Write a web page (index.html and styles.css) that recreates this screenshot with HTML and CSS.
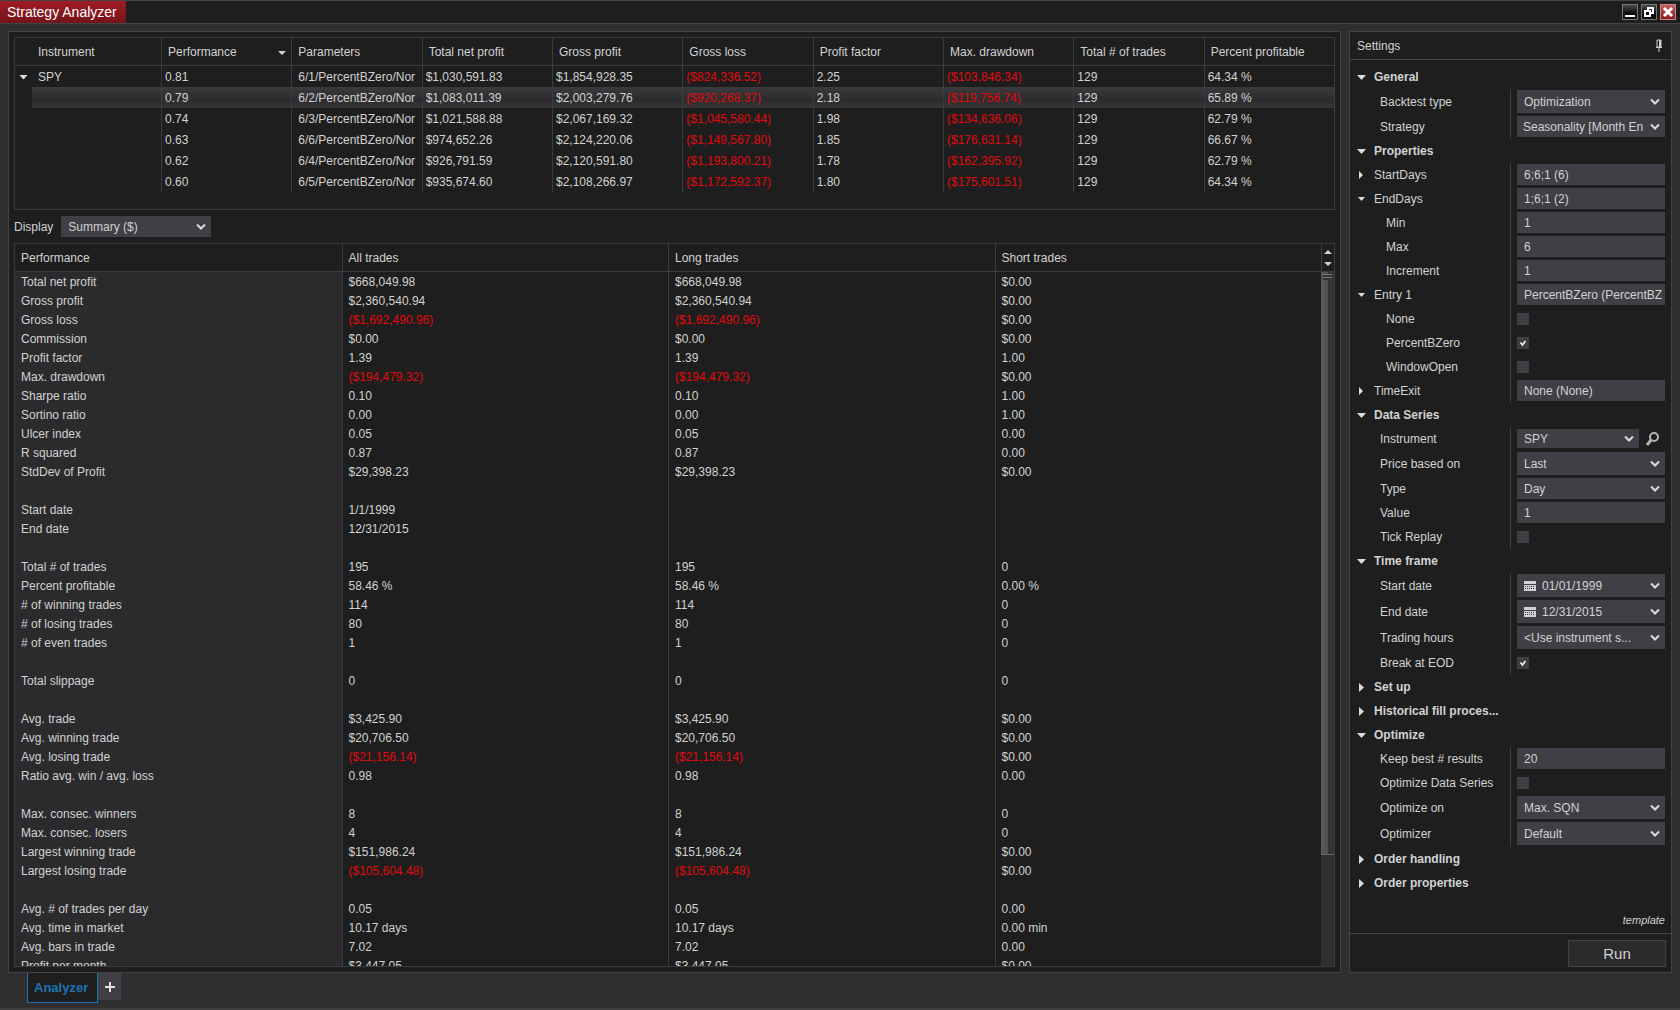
FILE: index.html
```html
<!DOCTYPE html>
<html lang="en">
<head>
    <meta charset="UTF-8">
    <meta name="viewport" content="width=device-width, initial-scale=1.0">
    <title>Strategy Analyzer</title>
    <link rel="stylesheet" href="styles.css">
</head>
<body>
    <header class="titlebar">
        <h1>Strategy Analyzer</h1>
        <div class="window-buttons">
            <button class="win-btn" aria-label="Minimize"><svg width="16" height="16" viewBox="0 0 16 16"><path d="M3 11h10v2H3z" fill="#fff"/></svg></button>
            <button class="win-btn" aria-label="Restore"><svg width="16" height="16" viewBox="0 0 16 16"><path d="M7 6V4h5v5h-2M4 7h5v5H4z" fill="none" stroke="#fff" stroke-width="2"/></svg></button>
            <button class="win-btn close" aria-label="Close"><svg width="16" height="16" viewBox="0 0 16 16"><path d="M4 4l8 8M12 4l-8 8" stroke="#fff" stroke-width="3"/></svg></button>
        </div>
    </header>

    <main class="workspace">
        <section class="panel results">
            <div class="grid-box optimizer-grid">
                <table class="optimizer">
                    <thead>
                        <tr>
                            <th class="toggle-col"></th>
                            <th class="instrument">Instrument</th>
                            <th class="sorted">Performance</th>
                            <th>Parameters</th>
                            <th>Total net profit</th>
                            <th>Gross profit</th>
                            <th>Gross loss</th>
                            <th>Profit factor</th>
                            <th>Max. drawdown</th>
                            <th>Total # of trades</th>
                            <th>Percent profitable</th>
                        </tr>
                    </thead>
                    <tbody id="optimizer-rows"></tbody>
                </table>
            </div>

            <div class="display-row">
                <label for="display">Display</label>
                <select id="display"><option>Summary ($)</option></select>
            </div>

            <div class="grid-box summary-grid">
                <div class="summary-scroll">
                    <table class="summary">
                        <thead>
                            <tr><th>Performance</th><th>All trades</th><th>Long trades</th><th>Short trades</th></tr>
                        </thead>
                        <tbody id="summary-rows"></tbody>
                    </table>
                </div>
                <div class="scrollbar">
                    <div class="scroll-arrows">
                        <button class="arrow up" aria-label="Scroll up"></button>
                        <button class="arrow down" aria-label="Scroll down"></button>
                    </div>
                    <div class="track"><div class="thumb"></div></div>
                </div>
            </div>
        </section>

        <aside class="panel settings">
            <div class="settings-head">
                <h2>Settings</h2>
                <button class="pin" aria-label="Pin"><svg width="8" height="14" viewBox="0 0 8 14"><path d="M2 1h4v7H2zM1 8.500h6M4 8v5" fill="none" stroke="#d0d0d0"/><path d="M4 1h2v7H4z" fill="#d0d0d0"/></svg></button>
            </div>

            <form class="properties">
                <h3><button type="button" class="expander open">General</button></h3>
                <div class="group">
                    <div class="row tall"><label for="backtest">Backtest type</label><select id="backtest"><option>Optimization</option></select></div>
                    <div class="row"><label for="strategy">Strategy</label><select id="strategy" class="wide-text"><option>Seasonality [Month En</option></select></div>
                </div>

                <h3><button type="button" class="expander open">Properties</button></h3>
                <div class="group">
                    <div class="row parent"><label for="startdays"><span class="mark"></span>StartDays</label><input type="text" id="startdays" value="6;6;1 (6)"></div>
                    <div class="row parent open"><label for="enddays"><span class="mark"></span>EndDays</label><input type="text" id="enddays" value="1;6;1 (2)"></div>
                    <div class="row child"><label for="min">Min</label><input type="text" id="min" value="1"></div>
                    <div class="row child"><label for="max">Max</label><input type="text" id="max" value="6"></div>
                    <div class="row child"><label for="increment">Increment</label><input type="text" id="increment" value="1"></div>
                    <div class="row parent open"><label for="entry"><span class="mark"></span>Entry 1</label><input type="text" id="entry" value="PercentBZero (PercentBZero)"></div>
                    <div class="row child"><label for="none">None</label><input type="checkbox" id="none"></div>
                    <div class="row child"><label for="pbz">PercentBZero</label><input type="checkbox" id="pbz" checked></div>
                    <div class="row child"><label for="window">WindowOpen</label><input type="checkbox" id="window"></div>
                    <div class="row parent"><label for="timeexit"><span class="mark"></span>TimeExit</label><input type="text" id="timeexit" value="None (None)"></div>
                </div>

                <h3><button type="button" class="expander open">Data Series</button></h3>
                <div class="group">
                    <div class="row">
                        <label for="instrument">Instrument</label>
                        <div class="with-search">
                            <select id="instrument"><option>SPY</option></select>
                            <button type="button" class="search" aria-label="Find instrument"><svg width="16" height="16" viewBox="0 0 16 16"><circle cx="9" cy="6" r="4" fill="none" stroke="#b4b4b4" stroke-width="2"/><path d="M6 9l-4 5" stroke="#b4b4b4" stroke-width="3"/></svg></button>
                        </div>
                    </div>
                    <div class="row tall"><label for="price">Price based on</label><select id="price"><option>Last</option></select></div>
                    <div class="row"><label for="type">Type</label><select id="type"><option>Day</option></select></div>
                    <div class="row"><label for="value">Value</label><input type="text" id="value" value="1"></div>
                    <div class="row"><label for="tick">Tick Replay</label><input type="checkbox" id="tick"></div>
                </div>

                <h3><button type="button" class="expander open">Time frame</button></h3>
                <div class="group">
                    <div class="row tall"><label for="start">Start date</label><select id="start" class="date"><option>01/01/1999</option></select></div>
                    <div class="row tall"><label for="end">End date</label><select id="end" class="date"><option>12/31/2015</option></select></div>
                    <div class="row tall"><label for="hours">Trading hours</label><select id="hours"><option>&lt;Use instrument s...</option></select></div>
                    <div class="row"><label for="eod">Break at EOD</label><input type="checkbox" id="eod" checked></div>
                </div>

                <h3><button type="button" class="expander">Set up</button></h3>
                <h3><button type="button" class="expander">Historical fill proces...</button></h3>
                <h3><button type="button" class="expander open">Optimize</button></h3>
                <div class="group">
                    <div class="row"><label for="keep">Keep best # results</label><input type="text" id="keep" value="20"></div>
                    <div class="row"><label for="optseries">Optimize Data Series</label><input type="checkbox" id="optseries"></div>
                    <div class="row tall"><label for="opton">Optimize on</label><select id="opton"><option>Max. SQN</option></select></div>
                    <div class="row tall"><label for="optimizer">Optimizer</label><select id="optimizer"><option>Default</option></select></div>
                </div>
                <h3><button type="button" class="expander">Order handling</button></h3>
                <h3><button type="button" class="expander">Order properties</button></h3>
            </form>

            <a class="template" href="#">template</a>
            <div class="run-bar"><button class="run">Run</button></div>
        </aside>
    </main>

    <footer class="tabs">
        <button class="tab">Analyzer</button>
        <button class="add-tab" aria-label="New tab"><svg width="12" height="12" viewBox="0 0 12 12"><path d="M6 1v10M1 6h10" stroke="#e0e0e0" stroke-width="2"/></svg></button>
    </footer>

    <script>
        const runs = [
            ['0.81', '6/1/PercentBZero/Nor', '$1,030,591.83', '$1,854,928.35', '($824,336.52)', '2.25', '($103,846.34)', '129', '64.34 %'],
            ['0.79', '6/2/PercentBZero/Nor', '$1,083,011.39', '$2,003,279.76', '($920,268.37)', '2.18', '($119,756.74)', '129', '65.89 %'],
            ['0.74', '6/3/PercentBZero/Nor', '$1,021,588.88', '$2,067,169.32', '($1,045,580.44)', '1.98', '($134,636.06)', '129', '62.79 %'],
            ['0.63', '6/6/PercentBZero/Nor', '$974,652.26', '$2,124,220.06', '($1,149,567.80)', '1.85', '($176,631.14)', '129', '66.67 %'],
            ['0.62', '6/4/PercentBZero/Nor', '$926,791.59', '$2,120,591.80', '($1,193,800.21)', '1.78', '($162,395.92)', '129', '62.79 %'],
            ['0.60', '6/5/PercentBZero/Nor', '$935,674.60', '$2,108,266.97', '($1,172,592.37)', '1.80', '($175,601.51)', '129', '64.34 %']
        ];

        // Empty rows separate the blocks of the summary
        const summary = [
            ['Total net profit', '$668,049.98', '$668,049.98', '$0.00'],
            ['Gross profit', '$2,360,540.94', '$2,360,540.94', '$0.00'],
            ['Gross loss', '($1,692,490.96)', '($1,692,490.96)', '$0.00'],
            ['Commission', '$0.00', '$0.00', '$0.00'],
            ['Profit factor', '1.39', '1.39', '1.00'],
            ['Max. drawdown', '($194,479.32)', '($194,479.32)', '$0.00'],
            ['Sharpe ratio', '0.10', '0.10', '1.00'],
            ['Sortino ratio', '0.00', '0.00', '1.00'],
            ['Ulcer index', '0.05', '0.05', '0.00'],
            ['R squared', '0.87', '0.87', '0.00'],
            ['StdDev of Profit', '$29,398.23', '$29,398.23', '$0.00'],
            ['', '', '', ''],
            ['Start date', '1/1/1999', '', ''],
            ['End date', '12/31/2015', '', ''],
            ['', '', '', ''],
            ['Total # of trades', '195', '195', '0'],
            ['Percent profitable', '58.46 %', '58.46 %', '0.00 %'],
            ['# of winning trades', '114', '114', '0'],
            ['# of losing trades', '80', '80', '0'],
            ['# of even trades', '1', '1', '0'],
            ['', '', '', ''],
            ['Total slippage', '0', '0', '0'],
            ['', '', '', ''],
            ['Avg. trade', '$3,425.90', '$3,425.90', '$0.00'],
            ['Avg. winning trade', '$20,706.50', '$20,706.50', '$0.00'],
            ['Avg. losing trade', '($21,156.14)', '($21,156.14)', '$0.00'],
            ['Ratio avg. win / avg. loss', '0.98', '0.98', '0.00'],
            ['', '', '', ''],
            ['Max. consec. winners', '8', '8', '0'],
            ['Max. consec. losers', '4', '4', '0'],
            ['Largest winning trade', '$151,986.24', '$151,986.24', '$0.00'],
            ['Largest losing trade', '($105,604.48)', '($105,604.48)', '$0.00'],
            ['', '', '', ''],
            ['Avg. # of trades per day', '0.05', '0.05', '0.00'],
            ['Avg. time in market', '10.17 days', '10.17 days', '0.00 min'],
            ['Avg. bars in trade', '7.02', '7.02', '0.00'],
            ['Profit per month', '$3,447.05', '$3,447.05', '$0.00']
        ];

        function addCell(row, text) {
            const cell = row.insertCell();
            cell.textContent = text;
            // Amounts in brackets are losses
            if (text.startsWith('(')) {
                cell.className = 'loss';
            }
            return cell;
        }

        runs.forEach((run, i) => {
            const row = document.getElementById('optimizer-rows').insertRow();
            const toggle = addCell(row, '');
            toggle.className = 'toggle-col';
            if (i === 0) {
                toggle.innerHTML = '<button class="expander open" aria-label="Collapse SPY"></button>';
            }
            if (i === 1) {
                row.className = 'selected';
            }
            addCell(row, i === 0 ? 'SPY' : '').className = 'instrument';
            run.forEach(text => addCell(row, text));
        });

        summary.forEach(line => {
            const row = document.getElementById('summary-rows').insertRow();
            line.forEach(text => addCell(row, text));
        });
    </script>
</body>
</html>
```
FILE: styles.css
```css
* {
    box-sizing: border-box;
}
body {
    margin: 0;
    height: 100vh;
    display: flex;
    flex-direction: column;
    overflow: hidden;
    background: #2f2f31;
    border-bottom: 2px solid #3e3e41;
    color: #d2d2d2;
    font-family: "Liberation Sans", Arial, sans-serif;
    font-size: 12px;
    line-height: 16px;
}
button, input, select {
    margin: 0;
    padding: 0;
    border: 0;
    border-radius: 0;
    background: none;
    color: inherit;
    font: inherit;
}
h1, h2, h3 {
    margin: 0;
    font-size: 12px;
    font-weight: normal;
}
svg {
    display: block;
}

/* Title bar */
.titlebar {
    display: flex;
    justify-content: space-between;
    height: 24px;
    background: #1e1e1e;
    border-top: 1px solid #434346;
    border-bottom: 1px solid #434346;
}
.titlebar h1 {
    padding: 0 9px 0 7px;
    background: linear-gradient(#a01c26, #741319);
    color: #fff;
    font-size: 14px;
    line-height: 22px;
}
.window-buttons {
    display: flex;
    gap: 3px;
    padding: 3px 4px;
}
.win-btn {
    width: 16px;
    height: 16px;
    background: linear-gradient(#505050, #0c0c0c 60%);
    outline: 1px solid #777;
    outline-offset: -1px;
}
.win-btn.close {
    background: linear-gradient(#c86468, #8a141c);
    outline-color: #c08a8c;
}

/* Panels */
.workspace {
    flex: 1;
    min-height: 0;
    display: flex;
    gap: 8px;
    padding: 7px 8px 0;
}
.panel {
    display: flex;
    flex-direction: column;
    background: #1e1e1e;
    border: 1px solid #434346;
}
.results {
    flex: 1;
    min-width: 0;
    padding: 5px;
}
.settings {
    width: 323px;
}
.grid-box {
    border: 1px solid #3c3c3f;
}

/* Tables */
table {
    width: 100%;
    table-layout: fixed;
    border-collapse: separate;
    border-spacing: 0;
}
th, td {
    padding: 0 0 0 6px;
    border-left: 1px solid #3c3c3f;
    font-weight: normal;
    text-align: left;
    white-space: nowrap;
    overflow: hidden;
}
th {
    height: 28px;
    border-bottom: 1px solid #3c3c3f;
}
.loss {
    color: #e00a0e;
}
.optimizer-grid {
    height: 173px;
}
.optimizer td {
    height: 21px;
    padding-left: 3px;
}
.optimizer td:nth-child(4) {
    padding-left: 6px;
}
.optimizer .toggle-col {
    width: 17px;
    padding: 0;
    border-left: 0;
}
.optimizer .instrument {
    width: 129px;
    padding-left: 6px;
    border-left: 0;
}
.optimizer .selected td:not(.toggle-col) {
    background: linear-gradient(#3b3b3d, #2c2c2e 60%, #353537);
}
.sorted::after {
    content: "";
    float: right;
    margin: 7px 5px 0 0;
    border: 4px solid transparent;
    border-top-color: #d2d2d2;
    border-bottom: 0;
}
.display-row {
    display: flex;
    align-items: center;
    gap: 8px;
    height: 33px;
}
.display-row select {
    width: 150px;
}
.summary-grid {
    flex: 1;
    min-height: 0;
    display: flex;
}
.summary-scroll {
    flex: 1;
    overflow: hidden;
}
.summary td {
    height: 19px;
}
.summary td:first-child {
    background: #2b2b2d;
}
.summary th:first-child, .summary td:first-child {
    border-left: 0;
}

/* Scrollbar */
.scrollbar {
    display: flex;
    flex-direction: column;
    width: 13px;
}
.scroll-arrows {
    display: flex;
    flex-direction: column;
    align-items: center;
    justify-content: center;
    gap: 8px;
    height: 28px;
    border-left: 1px solid #3c3c3f;
    border-bottom: 1px solid #3c3c3f;
}
.arrow {
    border: 4px solid transparent;
}
.arrow.up {
    border-top: 0;
    border-bottom-color: #d2d2d2;
}
.arrow.down {
    border-bottom: 0;
    border-top-color: #d2d2d2;
}
.track {
    flex: 1;
    background: #303032;
}
.thumb {
    height: 84%;
    padding-top: 2px;
    background: linear-gradient(90deg, #5c5c5c, #4e4e4e 50%, #343436 55%);
    border-bottom: 1px solid #6a6a6a;
}
.thumb::before {
    content: "";
    display: block;
    height: 6px;
    margin: 0 2px;
    background: repeating-linear-gradient(#777 0 1px, #333 1px 3px);
}

/* Settings */
.settings-head {
    display: flex;
    align-items: center;
    justify-content: space-between;
    height: 28px;
    padding: 0 8px 0 7px;
    border-bottom: 1px solid #434346;
}
.properties {
    padding-top: 5px;
}
.expander {
    display: block;
    height: 24px;
    width: 160px;
    padding-left: 9px;
    font-weight: bold;
    text-align: left;
    white-space: nowrap;
}
.expander::before {
    content: "";
    display: inline-block;
    width: 5px;
    height: 9px;
    margin-right: 10px;
    background: #dcdcdc;
    clip-path: polygon(0 0, 100% 50%, 0 100%);
    vertical-align: -1px;
}
.expander.open::before {
    width: 9px;
    height: 5px;
    margin: 0 8px 0 -2px;
    clip-path: polygon(0 0, 100% 0, 50% 100%);
    vertical-align: 1px;
}
.optimizer .expander {
    width: 17px;
    height: 21px;
    padding-left: 6px;
}
.optimizer .expander::before {
    margin-right: 0;
}
.row {
    display: grid;
    grid-template-columns: 161px 1fr;
    align-items: center;
    height: 24px;
    padding: 0 6px 1px 0;
}
.row.tall {
    height: 26px;
}
.row label {
    align-self: stretch;
    display: flex;
    align-items: center;
    margin-bottom: -1px;
    padding-left: 30px;
    border-right: 1px solid #434346;
}
.row.child label {
    padding-left: 36px;
}
.row.parent label {
    padding-left: 9px;
}
.row > :last-child {
    margin-left: 6px;
}
.mark {
    width: 4px;
    height: 8px;
    margin-right: 11px;
    background: #dcdcdc;
    clip-path: polygon(0 0, 100% 50%, 0 100%);
}
.open > label > .mark {
    width: 7px;
    height: 4px;
    margin: 0 9px 0 -1px;
    clip-path: polygon(0 0, 100% 0, 50% 100%);
}
input[type="text"], select {
    min-width: 0;
    height: 21px;
    padding: 0 3px 0 7px;
    background-color: #3f3f45;
}
select {
    appearance: none;
    padding-right: 18px;
    background-image: url("data:image/svg+xml,%3Csvg xmlns='http://www.w3.org/2000/svg' width='10' height='8'%3E%3Cpath d='M1 1.5l4 4 4-4' fill='none' stroke='%23dcdcdc' stroke-width='2'/%3E%3C/svg%3E");
    background-repeat: no-repeat;
    background-position: right 5px center;
}
.tall select {
    height: 23px;
}
select.wide-text {
    padding: 0 16px 0 6px;
}
select.date {
    padding-left: 25px;
    background-image: url("data:image/svg+xml,%3Csvg xmlns='http://www.w3.org/2000/svg' width='10' height='8'%3E%3Cpath d='M1 1.5l4 4 4-4' fill='none' stroke='%23dcdcdc' stroke-width='2'/%3E%3C/svg%3E"), url("data:image/svg+xml,%3Csvg xmlns='http://www.w3.org/2000/svg' width='12' height='12'%3E%3Cpath d='M0 1h12v3H0zM0 5h12v6H0z' fill='%23d2d2d2'/%3E%3Cpath d='M1 6.500h10M1 8.500h10' stroke='%233f3f45' stroke-dasharray='1 1'/%3E%3C/svg%3E");
    background-position: right 5px center, 7px center;
}
input[type="checkbox"] {
    appearance: none;
    width: 12px;
    height: 12px;
    background: #3f3f45;
}
input[type="checkbox"]:checked {
    background: #3f3f45 url("data:image/svg+xml,%3Csvg xmlns='http://www.w3.org/2000/svg' width='12' height='12'%3E%3Cpath d='M3.500 5.500l2 2.500 3-4' fill='none' stroke='%23fff' stroke-width='1.500'/%3E%3C/svg%3E");
}
.with-search {
    display: flex;
    align-items: center;
    gap: 6px;
    padding-right: 4px;
}
.with-search select {
    flex: 1;
    height: 19px;
}
.template {
    margin: auto 6px 5px auto;
    color: inherit;
    font-size: 11px;
    font-style: italic;
    text-decoration: none;
}
.run-bar {
    display: flex;
    justify-content: flex-end;
    padding: 6px 5px 5px;
    border-top: 1px solid #434346;
}
.run {
    width: 98px;
    height: 27px;
    background: #2b2b2d;
    border: 1px solid #434346;
    font-size: 15px;
}

/* Tabs */
.tabs {
    display: flex;
    align-items: flex-start;
    height: 35px;
    padding-left: 27px;
}
.tab {
    height: 30px;
    padding: 0 9px 0 6px;
    background: #1e1e1e;
    border: 1px solid #1c74b4;
    border-top: 0;
    color: #1c74b4;
    font-size: 13px;
    font-weight: bold;
}
.add-tab {
    display: flex;
    align-items: center;
    justify-content: center;
    width: 23px;
    height: 27px;
    background: #3f3f45;
}
```
